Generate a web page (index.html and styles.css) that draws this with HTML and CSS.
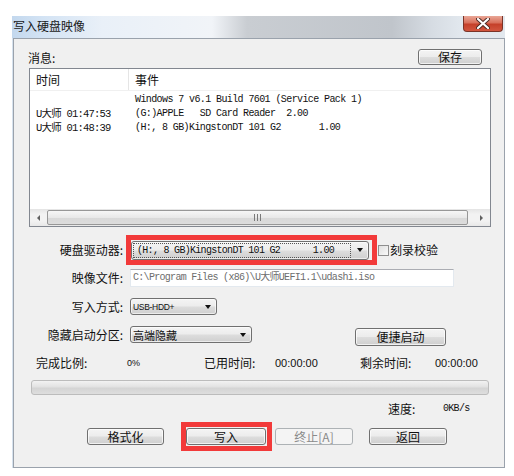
FILE: index.html
```html
<!DOCTYPE html>
<html lang="zh-CN">
<head>
    <meta charset="UTF-8">
    <title>写入硬盘映像</title>
    <link rel="stylesheet" href="styles.css">
</head>
<body>
    <div class="window">
        <div class="titlebar">
            <span class="title">写入硬盘映像</span>
            <span class="close">
                <svg width="14" height="11" viewBox="0 0 14 11">
                    <path d="M2 1 L12 10 M12 1 L2 10" stroke="#4a2a24" stroke-width="4" stroke-linecap="round"/>
                    <path d="M2 1 L12 10 M12 1 L2 10" stroke="#fff" stroke-width="2.2" stroke-linecap="round"/>
                </svg>
            </span>
        </div>

        <div class="client">
            <div class="msg-head">
                <span>消息:</span>
                <button class="btn btn-save">保存</button>
            </div>

            <div class="list">
                <div class="list-head">
                    <div class="col-time">时间</div>
                    <div class="col-event">事件</div>
                </div>
                <div class="list-body">
                    <div class="list-row">
                        <div class="col-time"></div>
                        <div class="col-event">Windows 7 v6.1 Build 7601 (Service Pack 1)</div>
                    </div>
                    <div class="list-row">
                        <div class="col-time">U大师 01:47:53</div>
                        <div class="col-event">(G:)APPLE   SD Card Reader  2.00</div>
                    </div>
                    <div class="list-row">
                        <div class="col-time">U大师 01:48:39</div>
                        <div class="col-event">(H:, 8 GB)KingstonDT 101 G2       1.00</div>
                    </div>
                </div>
                <div class="hscroll">
                    <div class="sb-arrow"><span class="tri-left"></span></div>
                    <div class="sb-thumb"><span class="grip"></span></div>
                    <div class="sb-arrow"><span class="tri-right"></span></div>
                </div>
            </div>

            <div class="form-row row-drive">
                <span class="field-label">硬盘驱动器:</span>
                <div class="highlight">
                    <div class="combo combo-drive">
                        <div class="focus-rect">
                            <span class="mono">(H:, 8 GB)KingstonDT 101 G2</span>
                            <span class="mono version">1.00</span>
                        </div>
                        <span class="arrow"></span>
                    </div>
                </div>
                <span class="checkbox"></span>
                <span class="check-label">刻录校验</span>
            </div>

            <div class="form-row row-file">
                <span class="field-label">映像文件:</span>
                <div class="textbox mono">C:\Program Files (x86)\U大师UEFI1.1\udashi.iso</div>
            </div>

            <div class="form-row row-mode">
                <span class="field-label">写入方式:</span>
                <div class="combo combo-mode">
                    <span class="combo-small">USB-HDD+</span>
                    <span class="arrow"></span>
                </div>
            </div>

            <div class="form-row row-hide">
                <span class="field-label">隐藏启动分区:</span>
                <div class="combo combo-hide">
                    <span class="combo-cjk">高端隐藏</span>
                    <span class="arrow"></span>
                </div>
                <button class="btn btn-quick">便捷启动</button>
            </div>

            <div class="stats">
                <span class="w-a">完成比例:</span>
                <span class="w-b num-small">0%</span>
                <span class="w-c">已用时间:</span>
                <span class="w-d num">00:00:00</span>
                <span class="w-e">剩余时间:</span>
                <span class="num">00:00:00</span>
            </div>

            <div class="progress"></div>

            <div class="speed">
                <span class="speed-label">速度:</span>
                <span class="mono">0KB/s</span>
            </div>

            <div class="actions">
                <button class="btn btn-action">格式化</button>
                <div class="highlight highlight-btn">
                    <button class="btn btn-action btn-write">写入</button>
                </div>
                <button class="btn btn-action btn-stop" disabled>终止[A]</button>
                <button class="btn btn-action btn-back">返回</button>
            </div>
        </div>
    </div>
</body>
</html>
```

FILE: styles.css
```css
* {
    box-sizing: border-box;
}
body {
    margin: 0;
    background: #fff;
    font-family: "Noto Sans CJK SC", "Liberation Sans", sans-serif;
    font-size: 12px;
    color: #111;
}
.window {
    margin: 16px 0 0 12px;
    width: 493px;
    background: #d6e2ee;
}
.titlebar {
    height: 22px;
    display: flex;
    justify-content: space-between;
    align-items: flex-start;
    background: linear-gradient(to right, #c3d8ee 0, #d3e3f4 30px, #e9f0f8 90px, #f1f4f8 200px, #c9cdd2 235px, #c0c5cb 380px, #d6dce3 420px, #e2e8ee 450px);
}
.title {
    padding: 3px 0 0 1px;
    line-height: 14px;
    font-size: 12px;
    color: #1a1a1a;
}
.close {
    width: 40px;
    height: 16px;
    margin-right: 2px;
    border: 1px solid #7a3428;
    border-top: none;
    border-radius: 0 0 4px 4px;
    background: linear-gradient(#e9a797 0, #d9705b 45%, #c5402a 55%, #d2563f 100%);
    display: flex;
    align-items: center;
    justify-content: center;
}
.client {
    margin-left: 1px;
    width: 492px;
    height: 430px;
    border: 1px solid #9aa2ac;
    background: #f0f0f0;
}

/* message list */
.msg-head {
    display: flex;
    justify-content: space-between;
    align-items: flex-end;
    padding: 10px 22px 0 14px;
    height: 26px;
    line-height: 14px;
}
.btn {
    font-family: "Noto Sans CJK SC", "Liberation Sans", sans-serif;
    font-size: 12px;
    line-height: 14px;
    padding: 0;
    color: #111;
    border: 1px solid #707070;
    border-radius: 3px;
    background: linear-gradient(#f4f4f4 0, #ececec 48%, #dddddd 52%, #cfcfcf 100%);
    box-shadow: inset 0 0 0 1px rgba(255, 255, 255, 0.7);
}
.btn:disabled {
    color: #8a8a8a;
    border-color: #adb2b5;
    background: #f4f4f4;
    box-shadow: none;
}
.btn-save {
    width: 64px;
    height: 16px;
}
.list {
    margin: 3px 0 0 15px;
    width: 462px;
    height: 159px;
    border: 1px solid #828790;
    background: #fff;
    display: flex;
    flex-direction: column;
}
.list-head {
    display: flex;
    height: 22px;
    align-items: center;
    border-bottom: 1px solid #f0f0f0;
}
.list-head .col-time {
    border-right: 1px solid #e5e5e5;
    height: 100%;
    display: flex;
    align-items: center;
}
.col-time {
    width: 99px;
    padding-left: 6px;
}
.col-event {
    padding-left: 6px;
}
.list-body {
    flex: 1;
    padding-top: 2px;
}
.list-row {
    display: flex;
    height: 14px;
    line-height: 14px;
    font-family: "Liberation Mono", "Noto Sans CJK SC", monospace;
    font-size: 10px;
    letter-spacing: -0.6px;
    white-space: pre;
    color: #111;
}
.list-row .col-time {
    font-size: 10.5px;
    letter-spacing: -0.8px;
}
.hscroll {
    height: 17px;
    display: flex;
    background: linear-gradient(#e4e4e4, #f2f2f2 30%, #f2f2f2 70%, #e8e8e8);
}
.sb-arrow {
    width: 17px;
    display: flex;
    align-items: center;
    justify-content: center;
}
.hscroll .sb-arrow:last-child {
    margin-left: auto;
}
.tri-left, .tri-right {
    width: 0;
    height: 0;
    border-top: 3px solid transparent;
    border-bottom: 3px solid transparent;
}
.tri-left {
    border-right: 3px solid #606060;
}
.tri-right {
    border-left: 3px solid #606060;
}
.sb-thumb {
    width: 421px;
    margin: 1px 0;
    border: 1px solid #979797;
    border-radius: 2px;
    background: linear-gradient(#f6f6f6 0, #e8e8e8 50%, #d8d8d8 51%, #dcdcdc 100%);
    display: flex;
    align-items: center;
    justify-content: center;
}
.grip {
    width: 7px;
    height: 7px;
    background: repeating-linear-gradient(to right, #7a7a7a 0, #7a7a7a 1px, transparent 1px, transparent 3px);
}

/* form */
.form-row {
    display: flex;
    align-items: center;
}
.field-label {
    width: 109px;
    text-align: right;
    line-height: 14px;
}
.row-drive {
    margin-top: 8px;
    height: 30px;
}
.highlight {
    border: 5px solid #f23a3a;
    display: flex;
    align-items: center;
}
.row-drive .highlight {
    margin-left: 3px;
    width: 251px;
    height: 30px;
}
.combo {
    display: flex;
    align-items: center;
    border: 1px solid #707070;
    border-radius: 3px;
    background: linear-gradient(#f4f4f4 0, #ececec 48%, #dddddd 52%, #cfcfcf 100%);
    box-shadow: inset 0 0 0 1px rgba(255, 255, 255, 0.6);
}
.arrow {
    width: 0;
    height: 0;
    margin-left: auto;
    margin-right: 5px;
    border-left: 3.5px solid transparent;
    border-right: 3.5px solid transparent;
    border-top: 4px solid #111;
}
.combo-drive {
    width: 238px;
    height: 19px;
}
.focus-rect {
    display: flex;
    align-items: center;
    margin-left: 1px;
    width: 218px;
    height: 15px;
    padding: 0 16px 0 3px;
    border: 1px dotted #555;
}
.mono {
    font-family: "Liberation Mono", "Noto Sans CJK SC", monospace;
    font-size: 10px;
    letter-spacing: -0.7px;
    white-space: pre;
}
.version {
    margin-left: auto;
}
.checkbox {
    width: 11px;
    height: 11px;
    margin-left: 1px;
    border: 1px solid #8f8f8f;
    background: linear-gradient(135deg, #e0e0e0, #fafafa);
}
.check-label {
    margin-left: 1px;
    line-height: 14px;
}
.row-file {
    margin-top: 4px;
}
.textbox {
    margin-left: 7px;
    width: 324px;
    height: 18px;
    line-height: 16px;
    padding-left: 2px;
    border: 1px solid #e3e9ef;
    border-top-color: #abadb3;
    background: #fff;
    color: #6d6d6d;
}
.row-mode {
    margin-top: 11px;
}
.combo-mode {
    margin-left: 7px;
    width: 87px;
    height: 17px;
}
.combo-small {
    padding-left: 2px;
    font-family: "Liberation Sans", sans-serif;
    font-size: 8.5px;
    letter-spacing: -0.3px;
}
.row-hide {
    margin-top: 11px;
    height: 20px;
    align-items: flex-start;
}
.row-hide .field-label {
    margin-top: 2px;
}
.combo-hide {
    margin-left: 7px;
    width: 122px;
    height: 17px;
}
.combo-cjk {
    padding-left: 2px;
    font-size: 11px;
    line-height: 14px;
}
.btn-quick {
    margin: 2px 0 0 103px;
    width: 91px;
    height: 18px;
}

/* status */
.stats {
    display: flex;
    margin-top: 10px;
    padding-left: 22px;
    height: 14px;
    line-height: 14px;
    align-items: center;
}
.w-a { width: 91px; }
.w-b { width: 77px; }
.w-c { width: 71px; }
.w-d { width: 85px; }
.w-e { width: 75px; }
.num {
    font-family: "Liberation Sans", sans-serif;
    font-size: 11px;
}
.num-small {
    font-family: "Liberation Sans", sans-serif;
    font-size: 9px;
}
.progress {
    margin: 10px 0 0 17px;
    width: 458px;
    height: 15px;
    border: 1px solid #bcbcbc;
    border-radius: 3px;
    background: linear-gradient(#f2f2f2 0, #e2e2e2 45%, #d4d4d4 55%, #dedede 100%);
}
.speed {
    display: flex;
    margin-top: 7px;
    padding-left: 374px;
    height: 14px;
    line-height: 14px;
    align-items: center;
}
.speed-label {
    width: 55px;
}
.actions {
    display: flex;
    align-items: center;
    margin-top: 6px;
    padding-left: 73px;
    height: 29px;
}
.btn-action {
    width: 77px;
    height: 17px;
}
.highlight-btn {
    margin-left: 17px;
    width: 91px;
    height: 29px;
}
.btn-write {
    width: 80px;
}
.btn-stop {
    margin-left: 3px;
    width: 78px;
}
.btn-back {
    margin-left: 16px;
    width: 78px;
}
```
